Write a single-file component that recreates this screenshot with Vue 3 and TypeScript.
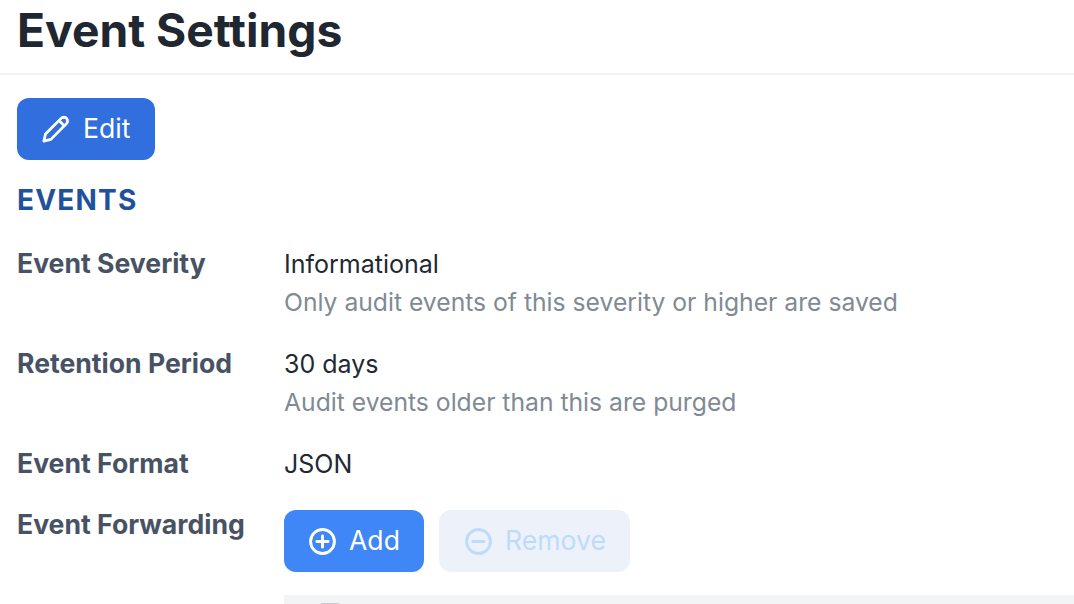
<script setup lang="ts">
interface Row { label: string; value: string; hint?: string }
const rows: Row[] = [
  { label: 'Event Severity', value: 'Informational', hint: 'Only audit events of this severity or higher are saved' },
  { label: 'Retention Period', value: '30 days', hint: 'Audit events older than this are purged' },
  { label: 'Event Format', value: 'JSON' },
]
</script>

<template>
  <div class="page">
    <header class="head"><h1>Event Settings</h1></header>
    <main class="body">
      <button class="btn edit">
        <svg viewBox="0 0 24 24" class="ico" fill="none" stroke="currentColor" stroke-width="2.4" stroke-linecap="round" stroke-linejoin="round">
          <path d="M3 16.3 16.4 2.9a3.1 3.1 0 0 1 4.6 4.5L7.6 20.9 1.6 22.4z" />
          <path d="M14.8 5l4.1 4.1" />
        </svg>
        <span>Edit</span>
      </button>
      <h2>EVENTS</h2>
      <dl class="rows">
        <div v-for="r in rows" :key="r.label" class="row">
          <dt>{{ r.label }}</dt>
          <dd>
            <div class="val">{{ r.value }}</div>
            <div v-if="r.hint" class="hint">{{ r.hint }}</div>
          </dd>
        </div>
        <div class="row fwd">
          <dt>Event Forwarding</dt>
          <dd>
            <div class="actions">
              <button class="btn add">
                <svg viewBox="0 0 24 24" class="ico2" fill="none" stroke="currentColor" stroke-width="2.6" stroke-linecap="round">
                  <circle cx="12" cy="12" r="10.6" /><path d="M12 7v10M7 12h10" />
                </svg>
                <span>Add</span>
              </button>
              <button class="btn remove">
                <svg viewBox="0 0 24 24" class="ico2" fill="none" stroke="currentColor" stroke-width="2.6" stroke-linecap="round">
                  <circle cx="12" cy="12" r="10.6" /><path d="M7 12h10" />
                </svg>
                <span>Remove</span>
              </button>
            </div>
            <div class="table"><span class="check"></span></div>
          </dd>
        </div>
      </dl>
    </main>
  </div>
</template>

<style>
html, body { margin: 0; background: #fff; overflow: hidden; }
</style>

<style scoped>
.page { width: 1074px; height: 604px; overflow: hidden; font-family: Inter, "Liberation Sans", sans-serif; color: #1f2933; }
.head { height: 73px; border-bottom: 2px solid #f0f2f5; padding-left: 17px; }
h1 { margin: 0; font-size: 46.2px; line-height: 60px; font-weight: 700; color: #1f2730; }
.body { padding: 23px 0 0 17px; }
.btn { display: flex; align-items: center; border: 0; height: 62px; border-radius: 12px; font-family: inherit; font-size: 26.6px; color: #fff; padding: 0; }
.btn span { margin-top: -2px; }
.edit { width: 138px; background: #316fdf; padding-left: 25px; gap: 13px; }
.ico { width: 28px; height: 28px; margin-top: -1px; }
h2 { margin: 23px 0 0; font-size: 28px; line-height: 34px; font-weight: 700; color: #1f519c; letter-spacing: 1.2px; }
.rows { margin: 26px 0 0; }
.row { display: flex; margin-bottom: 23px; }
dt { width: 267px; font-size: 26.6px; line-height: 40px; font-weight: 700; color: #475264; }
dd { margin: 0; flex: 1; padding-top: 1px; }
.val { font-size: 25px; line-height: 40px; color: #1f2933; }
.hint { font-size: 24.7px; line-height: 36px; color: #808a94; }
.fwd { margin-top: -3px; }
.fwd dd { padding-top: 6px; }
.actions { display: flex; gap: 15px; }
.add { width: 140px; background: #3f86f6; padding-left: 25px; gap: 13px; }
.remove { width: 191px; background: #edf2fa; color: #bedbfb; padding-left: 26px; gap: 13px; }
.ico2 { width: 27px; height: 27px; }
.table { margin-top: 23px; height: 60px; background: #f3f4f6; position: relative; }
.check { position: absolute; left: 35px; top: 8px; width: 22px; height: 22px; border-radius: 4px; background: #c5c8d0; }
</style>
